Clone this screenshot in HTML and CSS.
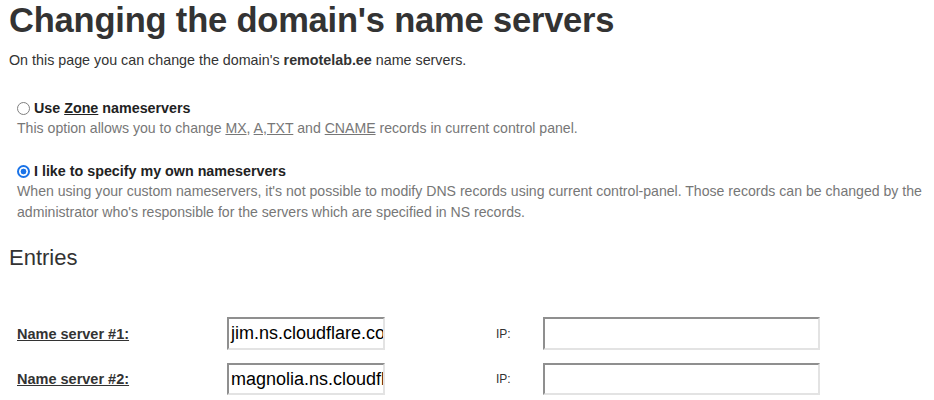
FILE: index.html
```html
<!DOCTYPE html>
<html>
<head>
<meta charset="utf-8">
<link rel="stylesheet" href="styles.css">
</head>
<body>
<h1 class="title">Changing the domain's name servers</h1>
<p class="intro">On this page you can change the domain's <b>remotelab.ee</b> name servers.</p>

<div class="option">
  <label class="opt-label"><span class="radio"></span> Use <u>Zone</u> nameservers</label>
  <p class="opt-desc">This option allows you to change <u>MX</u>, <u>A</u>,<u>TXT</u> and <u>CNAME</u> records in current control panel.</p>
</div>

<div class="option">
  <label class="opt-label"><span class="radio checked"></span> I like to specify my own nameservers</label>
  <p class="opt-desc">When using your custom nameservers, it's not possible to modify DNS records using current control-panel. Those records can be changed by the administrator who's responsible for the servers which are specified in NS records.</p>
</div>

<h2 class="entries">Entries</h2>

<div class="grid">
  <span class="ns-label">Name server #1:</span>
  <div class="field ns-field">jim.ns.cloudflare.com</div>
  <span class="ip-label">IP:</span>
  <div class="field ip-field"></div>

  <span class="ns-label">Name server #2:</span>
  <div class="field ns-field">magnolia.ns.cloudflare.com</div>
  <span class="ip-label">IP:</span>
  <div class="field ip-field"></div>
</div>
</body>
</html>
```

FILE: styles.css
```css
html, body {
  margin: 0;
  padding: 0;
  background: #fff;
}
body {
  padding: 0 0 0 9px;
  font-family: "Liberation Sans", Arial, sans-serif;
  color: #333;
  font-size: 14.3px;
}
.title {
  margin: 0;
  font-size: 34.5px;
  font-weight: bold;
  line-height: 40px;
  color: #333;
  letter-spacing: -0.2px;
}
.intro {
  margin: 11px 0 0;
  line-height: 18px;
  font-size: 14.3px;
}
.option {
  margin-top: 29px;
  padding-left: 8px;
}
.option + .option {
  margin-top: 22px;
}
.opt-label {
  display: block;
  font-weight: bold;
  font-size: 14.3px;
  line-height: 20px;
  color: #222;
}
.radio {
  display: inline-block;
  vertical-align: -2px;
  width: 11px;
  height: 11px;
  border: 1px solid #808080;
  border-radius: 50%;
  box-sizing: content-box;
  background: #fff;
}
.radio.checked {
  width: 9px;
  height: 9px;
  border: 2px solid #1a73e8;
  background: radial-gradient(circle, #1a73e8 0 2.6px, #fff 3.2px);
}
.opt-desc {
  margin: 0;
  color: #777;
  line-height: 21px;
  font-size: 14.1px;
}
.entries {
  margin: 22px 0 0;
  font-size: 22px;
  font-weight: normal;
  line-height: 26px;
  color: #333;
}
.grid {
  margin-top: 46px;
  padding-left: 8px;
  display: grid;
  grid-template-columns: 210px 158px 111px 47px 277px;
  grid-template-rows: 33px 32px;
  row-gap: 13px;
  align-items: center;
}
.ns-label {
  grid-column: 1;
  font-weight: bold;
  text-decoration: underline;
  font-size: 14.5px;
  color: #333;
}
.ns-field { grid-column: 2; }
.ip-label {
  grid-column: 4;
  font-size: 12px;
  color: #333;
}
.ip-field { grid-column: 5; }
.field {
  box-sizing: border-box;
  height: 100%;
  border-style: solid;
  border-width: 2px;
  border-color: #8f8f8f #e3e3e3 #e3e3e3 #8f8f8f;
  font-family: "Liberation Sans", Arial, sans-serif;
  font-size: 18px;
  color: #000;
  padding: 0 2px;
  display: flex;
  align-items: center;
  white-space: nowrap;
  overflow: hidden;
}
```
